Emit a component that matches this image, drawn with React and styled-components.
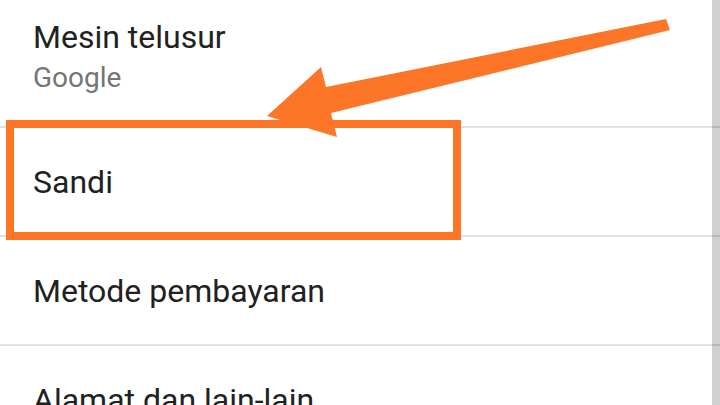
import React from 'react'
import styled, { createGlobalStyle } from 'styled-components'

const GlobalStyle = createGlobalStyle`
    html, body {
        margin: 0;
        padding: 0;
        background: #ffffff;
    }
    body {
        font-family: Roboto, "Noto Sans", sans-serif;
    }
`

const items = [
    { title: 'Sandi' },
    { title: 'Metode pembayaran' },
    { title: 'Alamat dan lain-lain' },
]

function App() {
    return (
        <>
            <GlobalStyle />
            <Screen>
                <List>
                    <TopItem>
                        <Title>Mesin telusur</Title>
                        <Summary>Google</Summary>
                    </TopItem>
                    {items.map((item) => (
                        <Item key={item.title}>
                            <Title>{item.title}</Title>
                        </Item>
                    ))}
                </List>
                <Scrollbar />
                <Highlight />
                <Arrow viewBox="0 0 720 405">
                    <polygon
                        points="666,19 326,87 321,67 267,116 337,137 331,113 670,30"
                        fill="#fd7628"
                    />
                </Arrow>
            </Screen>
        </>
    )
}

export default App

const Screen = styled.div`
    position: relative;
    width: 720px;
    height: 405px;
    overflow: hidden;
    background: #ffffff;
`
const List = styled.div`
    display: flex;
    flex-direction: column;
`
const TopItem = styled.div`
    height: 128px;
    flex-shrink: 0;
    box-sizing: border-box;
    padding: 17px 0 0 33px;
    border-bottom: 2px solid #e2e2e2;
`
const Item = styled.div`
    height: 109px;
    flex-shrink: 0;
    box-sizing: border-box;
    padding-left: 33px;
    display: flex;
    align-items: center;
    border-bottom: 2px solid #e2e2e2;
`
const Title = styled.div`
    font-size: 32px;
    line-height: 40px;
    color: #212121;
    white-space: nowrap;
`
const Summary = styled.div`
    font-size: 28px;
    line-height: 36px;
    color: #757575;
    margin-top: 3px;
`
const Scrollbar = styled.div`
    position: absolute;
    top: 0;
    right: 0;
    width: 8px;
    height: 100%;
    background: rgba(0, 0, 0, 0.185);
`
const Highlight = styled.div`
    position: absolute;
    left: 6px;
    top: 120px;
    width: 455px;
    height: 120px;
    box-sizing: border-box;
    border: 8px solid #fd7628;
`
const Arrow = styled.svg`
    position: absolute;
    left: 0;
    top: 0;
    width: 720px;
    height: 405px;
`
